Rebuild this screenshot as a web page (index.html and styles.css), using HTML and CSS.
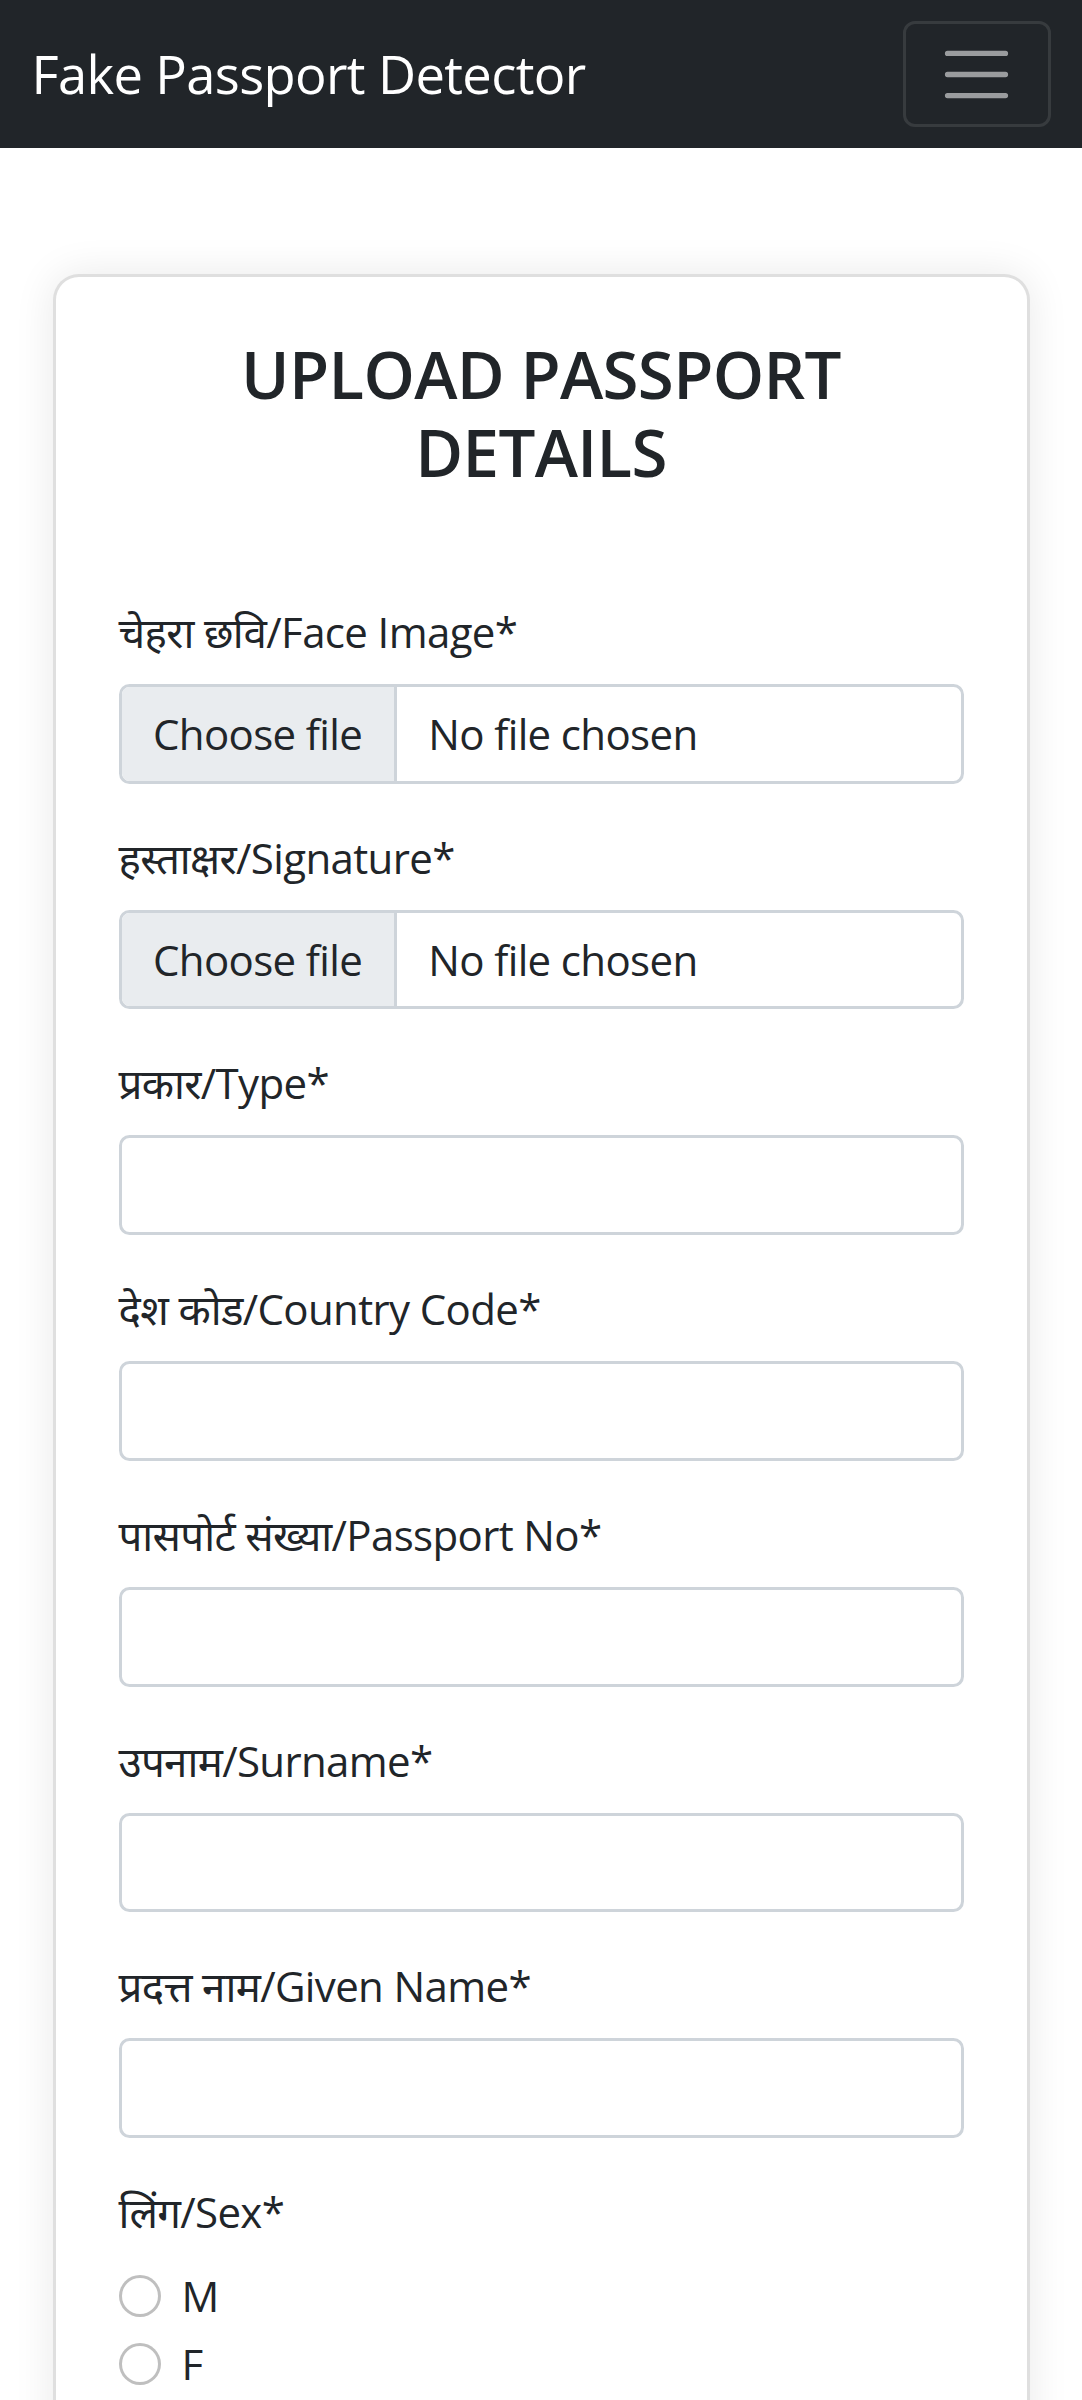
FILE: index.html
```html
<!DOCTYPE html>
<html lang="en">
<head>
<meta charset="utf-8">
<title>Fake Passport Detector</title>
<link rel="stylesheet" href="styles.css">
</head>
<body>
<nav class="navbar">
  <a class="brand" href="#">Fake Passport Detector</a>
  <button class="toggler" type="button" aria-label="Toggle navigation">
    <svg class="toggler-icon" viewBox="0 0 30 30" xmlns="http://www.w3.org/2000/svg"><path stroke="rgba(255,255,255,0.55)" stroke-linecap="round" stroke-miterlimit="10" stroke-width="2" d="M4 7h22M4 15h22M4 23h22"/></svg>
  </button>
</nav>
<main class="page">
  <div class="card">
    <h2 class="card-title">UPLOAD PASSPORT DETAILS</h2>
    <form class="form">
      <div class="field">
        <div class="field-label">चेहरा छवि/Face Image*</div>
        <label class="file-control"><span class="file-btn">Choose file</span><span class="file-name">No file chosen</span><input type="file" hidden></label>
      </div>
      <div class="field">
        <div class="field-label">हस्ताक्षर/Signature*</div>
        <label class="file-control"><span class="file-btn">Choose file</span><span class="file-name">No file chosen</span><input type="file" hidden></label>
      </div>
      <div class="field">
        <label class="field-label" for="type">प्रकार/Type*</label>
        <input class="text-input" type="text" id="type">
      </div>
      <div class="field">
        <label class="field-label" for="cc">देश कोड/Country Code*</label>
        <input class="text-input" type="text" id="cc">
      </div>
      <div class="field">
        <label class="field-label" for="pno">पासपोर्ट संख्या/Passport No*</label>
        <input class="text-input" type="text" id="pno">
      </div>
      <div class="field">
        <label class="field-label" for="sur">उपनाम/Surname*</label>
        <input class="text-input" type="text" id="sur">
      </div>
      <div class="field">
        <label class="field-label" for="given">प्रदत्त नाम/Given Name*</label>
        <input class="text-input" type="text" id="given">
      </div>
      <div class="field">
        <div class="field-label">लिंग/Sex*</div>
        <div class="check"><input class="radio" type="radio" name="sex" id="sexM"><label for="sexM">M</label></div>
        <div class="check"><input class="radio" type="radio" name="sex" id="sexF"><label for="sexF">F</label></div>
      </div>
    </form>
  </div>
</main>
</body>
</html>
```

FILE: styles.css
```css
* {
  box-sizing: border-box;
}

html, body {
  margin: 0;
  padding: 0;
  background: #ffffff;
}

body {
  font-family: "Open Sans", "Noto Sans Devanagari", "Lohit Devanagari", "Noto Sans", sans-serif;
  font-size: 42px;
  line-height: 1.5;
  letter-spacing: -0.015em;
  color: #212529;
}

.navbar {
  display: flex;
  align-items: center;
  justify-content: space-between;
  padding: 21px 31.5px;
  background: #212529;
}

.brand {
  font-size: 52.5px;
  line-height: 1.5;
  padding: 8px 0;
  color: #ffffff;
  text-decoration: none;
  white-space: nowrap;
  letter-spacing: -0.012em;
}

.toggler {
  display: block;
  padding: 10.5px 31.5px;
  background: transparent;
  border: 3px solid rgba(255, 255, 255, 0.1);
  border-radius: 12px;
  line-height: 1;
}

.toggler-icon {
  display: block;
  width: 79px;
  height: 79px;
}

.page {
  padding: 126px 52.5px 0;
}

.card {
  background: #ffffff;
  border: 3px solid rgba(0, 0, 0, 0.125);
  border-radius: 26px;
  box-shadow: 0 0 42px rgba(0, 0, 0, 0.09);
  padding: 58px 63px 63px;
}

.card-title {
  margin: 0 0 108px;
  font-size: 65.4px;
  font-weight: 600;
  line-height: 1.2;
  letter-spacing: -0.01em;
  text-align: center;
}

.form {
  display: flex;
  flex-direction: column;
  gap: 42px;
}

.field-label {
  display: block;
  margin-bottom: 21px;
}

.text-input,
.file-control {
  display: block;
  width: 100%;
  height: 99.75px;
  border: 3px solid #ced4da;
  border-radius: 10.5px;
  background: #ffffff;
  font: inherit;
  color: #212529;
}

.text-input {
  padding: 15.375px 31.5px;
}

.file-control {
  display: flex;
  align-items: stretch;
  overflow: hidden;
}

.file-btn {
  display: flex;
  align-items: center;
  padding: 0 31.5px;
  background: #e9ecef;
  border-right: 3px solid #ced4da;
}

.file-name {
  display: flex;
  align-items: center;
  padding: 0 31.5px;
}

.check {
  display: flex;
  align-items: flex-start;
  gap: 21px;
  min-height: 63px;
  margin-bottom: 5.25px;
}

.radio {
  appearance: none;
  -webkit-appearance: none;
  flex-shrink: 0;
  width: 42px;
  height: 42px;
  margin: 10.5px 0 0;
  border: 3px solid rgba(0, 0, 0, 0.25);
  border-radius: 50%;
  background: #ffffff;
}
```
